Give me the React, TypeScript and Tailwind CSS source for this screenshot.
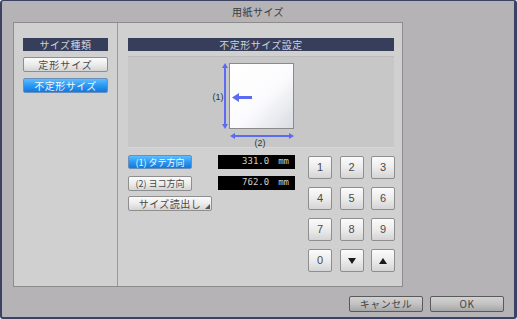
import React from 'react';

const jp = { fontFamily: '"Noto Sans CJK JP", "Noto Sans", sans-serif' };
const mono = { fontFamily: '"DejaVu Sans Mono", "Liberation Mono", monospace' };

const lightBtn =
  'bg-gradient-to-b from-[#fbfbfb] via-[#ececec] to-[#d4d4d4] border border-[#8e8e8e] rounded-[2px] text-[#4a4a4a]';
const blueBtn =
  'bg-gradient-to-b from-[#5cbcff] via-[#2a98f4] to-[#1478d8] border border-[#6a8fb8] rounded-[2px] text-[#f4f8ff]';

function Header({ label }: { label: string }) {
  return (
    <div className="h-[13px] bg-[#373e5b] text-[#d0d2dc] text-[10px] leading-[13px] text-center tracking-[0.5px]">
      {label}
    </div>
  );
}

function Tri({ up }: { up?: boolean }) {
  return (
    <svg width="8" height="6" viewBox="0 0 8 6">
      <polygon points={up ? '4,0 8,6 0,6' : '0,0 8,0 4,6'} fill="#1a1a1a" />
    </svg>
  );
}

function Preview() {
  const blue = '#5d6af2';
  return (
    <div className="mt-[5px] h-[92px] w-[266px] bg-[#c7c7c7] border-t border-[#bcbcbc] border-b border-b-[#d6d6d6]">
      <svg width="266" height="91" viewBox="0 0 266 91">
        <defs>
          <linearGradient id="paper" x1="0" y1="0" x2="1" y2="1">
            <stop offset="0" stopColor="#ffffff" />
            <stop offset="0.55" stopColor="#fbfbfd" />
            <stop offset="1" stopColor="#d9dbe2" />
          </linearGradient>
        </defs>
        <rect x="101.5" y="6.5" width="64" height="65" fill="url(#paper)" stroke="#8a8a8a" />
        {/* (1) vertical arrow */}
        <line x1="97" y1="8" x2="97" y2="70" stroke={blue} strokeWidth="2" />
        <polygon points="97,6 94,11 100,11" fill={blue} />
        <polygon points="97,72 94,67 100,67" fill={blue} />
        <text x="90" y="43" fontSize="9" fill="#333" textAnchor="middle" fontFamily="Liberation Sans, sans-serif">(1)</text>
        {/* direction arrow */}
        <line x1="110" y1="40.5" x2="124" y2="40.5" stroke={blue} strokeWidth="3" />
        <polygon points="104,40.5 111,36 111,45" fill={blue} />
        {/* (2) horizontal arrow */}
        <line x1="104" y1="79" x2="164" y2="79" stroke={blue} strokeWidth="2" />
        <polygon points="102,79 107,76 107,82" fill={blue} />
        <polygon points="166,79 161,76 161,82" fill={blue} />
        <text x="132" y="89" fontSize="9" fill="#333" textAnchor="middle" fontFamily="Liberation Sans, sans-serif">(2)</text>
      </svg>
    </div>
  );
}

function Display({ value }: { value: string }) {
  return (
    <div className="w-[77px] h-[14px] bg-black flex items-center justify-end pr-[6px] text-[9px] text-[#cfcfcf] gap-[9px]" style={mono}>
      <span>{value}</span>
      <span>mm</span>
    </div>
  );
}

export default function App() {
  const keys: React.ReactNode[] = ['1', '2', '3', '4', '5', '6', '7', '8', '9', '0', <Tri key="d" />, <Tri key="u" up />];

  return (
    <div
      className="w-[517px] h-[319px] bg-[#b5b3b6] border-t border-l-2 border-r-[3px] border-b-2 border-[#3b4263] rounded-[3px] flex flex-col"
      style={jp}
    >
      <div className="h-[21px] flex items-center justify-center text-[10px] text-[#3c3c3c] tracking-[0.5px]">
        用紙サイズ
      </div>

      <div className="ml-[11px] w-[390px] h-[265px] border border-[#8c8c8c] bg-[#d0d0d0] flex">
        {/* size type */}
        <div className="w-[104px] border-r border-[#999] pt-[15px] pl-[9px] flex flex-col">
          <div className="w-[85px]">
            <Header label="サイズ種類" />
          </div>
          <button className={`mt-[6px] w-[85px] h-[15px] text-[10px] leading-none tracking-[1px] ${lightBtn}`}>定形サイズ</button>
          <button className={`mt-[6px] w-[85px] h-[15px] text-[10px] leading-none tracking-[0.5px] ${blueBtn}`}>不定形サイズ</button>
        </div>

        {/* custom size */}
        <div className="pt-[15px] pl-[10px] flex flex-col">
          <div className="w-[266px]">
            <Header label="不定形サイズ設定" />
          </div>
          <Preview />

          <div className="mt-[7px] flex">
            <div className="w-[167px] flex flex-col">
              <div className="flex justify-between">
                <button className={`w-[64px] h-[14px] text-[9px] leading-none ${blueBtn}`}>(1) タテ方向</button>
                <Display value="331.0" />
              </div>
              <div className="mt-[7px] flex justify-between">
                <button className={`w-[64px] h-[15px] text-[9px] leading-none ${lightBtn}`}>(2) ヨコ方向</button>
                <Display value="762.0" />
              </div>
              <button className={`relative mt-[5px] w-[84px] h-[15px] text-[10px] leading-none tracking-[0.5px] ${lightBtn}`}>
                サイズ読出し
                <svg className="absolute right-[1px] bottom-[1px]" width="5" height="5" viewBox="0 0 5 5">
                  <polygon points="5,0 5,5 0,5" fill="#555" />
                </svg>
              </button>
            </div>

            <div className="ml-[13px] mt-[1px] grid grid-cols-[24px_24px_24px] gap-x-[7.5px] gap-y-[8px]">
              {keys.map((k, i) => (
                <button
                  key={i}
                  className={`w-[24px] h-[23px] flex items-center justify-center text-[11px] ${lightBtn}`}
                  style={{ fontFamily: '"Liberation Sans", sans-serif' }}
                >
                  {k}
                </button>
              ))}
            </div>
          </div>
        </div>
      </div>

      <div className="flex justify-end gap-[7px] pt-[9px] pr-[10px]">
        {['キャンセル', 'OK'].map((t) => (
          <button
            key={t}
            className="w-[74px] h-[16px] bg-gradient-to-b from-[#d2d2d2] via-[#c2c2c2] to-[#a6a6a6] border border-[#5a5a5a] rounded-[2px] text-[10px] leading-none text-[#444] tracking-[0.5px]"
          >
            {t}
          </button>
        ))}
      </div>
    </div>
  );
}
